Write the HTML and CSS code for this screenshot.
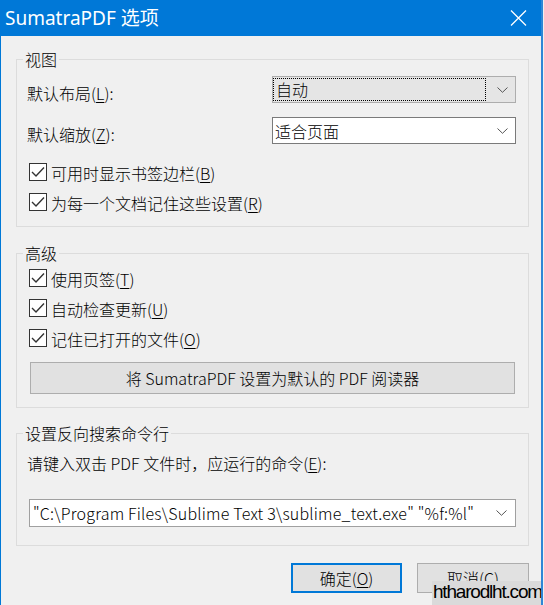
FILE: index.html
```html
<!DOCTYPE html>
<html lang="zh-CN">
<head>
<meta charset="utf-8">
<title>SumatraPDF 选项</title>
<link rel="stylesheet" href="styles.css">
</head>
<body>
<div class="window">
  <div class="titlebar">
    <span class="title">SumatraPDF 选项</span>
    <svg class="close" width="17" height="16" viewBox="0 0 17 16"><path d="M1 0.5 L16 15.5 M16 0.5 L1 15.5" stroke="#fff" stroke-width="1.3" fill="none"/></svg>
  </div>

  <fieldset class="group g1">
    <legend>视图</legend>
    <div class="inner">
      <div class="field">
        <span class="label">默认布局(<u>L</u>):</span>
        <div class="select focused">
          <span class="focus">自动</span>
          <svg class="chev" width="11" height="6" viewBox="0 0 11 6"><path d="M0.5 0.5 L5.5 5.3 L10.5 0.5" stroke="#555" stroke-width="1" fill="none"/></svg>
        </div>
      </div>
      <div class="field">
        <span class="label">默认缩放(<u>Z</u>):</span>
        <div class="select">
          <span class="value">适合页面</span>
          <svg class="chev" width="11" height="6" viewBox="0 0 11 6"><path d="M0.5 0.5 L5.5 5.3 L10.5 0.5" stroke="#555" stroke-width="1" fill="none"/></svg>
        </div>
      </div>
      <div class="checks c1">
        <div class="check"><span class="box"><svg width="16" height="16" viewBox="0 0 16 16"><path d="M2 8 L6 12 L14 3.5" stroke="#333" stroke-width="1.4" fill="none"/></svg></span><span class="ctext">可用时显示书签边栏(<u>B</u>)</span></div>
        <div class="check"><span class="box"><svg width="16" height="16" viewBox="0 0 16 16"><path d="M2 8 L6 12 L14 3.5" stroke="#333" stroke-width="1.4" fill="none"/></svg></span><span class="ctext">为每一个文档记住这些设置(<u>R</u>)</span></div>
      </div>
    </div>
  </fieldset>

  <fieldset class="group g2">
    <legend>高级</legend>
    <div class="inner">
      <div class="check"><span class="box"><svg width="16" height="16" viewBox="0 0 16 16"><path d="M2 8 L6 12 L14 3.5" stroke="#333" stroke-width="1.4" fill="none"/></svg></span><span class="ctext">使用页签(<u>T</u>)</span></div>
      <div class="check"><span class="box"><svg width="16" height="16" viewBox="0 0 16 16"><path d="M2 8 L6 12 L14 3.5" stroke="#333" stroke-width="1.4" fill="none"/></svg></span><span class="ctext">自动检查更新(<u>U</u>)</span></div>
      <div class="check"><span class="box"><svg width="16" height="16" viewBox="0 0 16 16"><path d="M2 8 L6 12 L14 3.5" stroke="#333" stroke-width="1.4" fill="none"/></svg></span><span class="ctext">记住已打开的文件(<u>O</u>)</span></div>
      <button class="wide">将 SumatraPDF 设置为默认的 PDF 阅读器</button>
    </div>
  </fieldset>

  <fieldset class="group g3">
    <legend>设置反向搜索命令行</legend>
    <div class="inner">
      <div class="plain">请键入双击 PDF 文件时，应运行的命令(<u>E</u>):</div>
      <div class="select combo">
        <span class="value">"C:\Program Files\Sublime Text 3\sublime_text.exe" "%f:%l"</span>
        <svg class="chev" width="11" height="6" viewBox="0 0 11 6"><path d="M0.5 0.5 L5.5 5.3 L10.5 0.5" stroke="#555" stroke-width="1" fill="none"/></svg>
      </div>
    </div>
  </fieldset>

  <div class="buttons">
    <button class="btn ok">确定(<u>O</u>)</button>
    <button class="btn cancel">取消(<u>C</u>)</button>
  </div>

  <div class="watermark">htharodlht.com</div>
</div>
</body>
</html>
```

FILE: styles.css
```css
html, body {
  margin: 0;
  padding: 0;
}
body {
  background: #f0f0f0;
  font-family: "Noto Sans CJK SC", "Microsoft YaHei", sans-serif;
  font-size: 16px;
  font-weight: 300;
  color: #000;
}
u {
  text-decoration: underline;
  text-underline-offset: 2px;
}
.window {
  position: relative;
  width: 543px;
  height: 605px;
  box-sizing: border-box;
  border-left: 1px solid #0078d7;
  border-right: 2px solid #2f86d6;
  background: #f0f0f0;
  overflow: hidden;
}
.titlebar {
  height: 36px;
  background: #0078d7;
  color: #fff;
  display: flex;
  align-items: center;
  justify-content: space-between;
  padding: 0 14px 0 4px;
}
.title {
  font-family: "Noto Sans", "Noto Sans CJK SC", sans-serif;
  font-size: 19px;
  font-weight: 400;
  line-height: 36px;
  white-space: nowrap;
}
.close {
  display: block;
}

.group {
  border: 1px solid #dcdcdc;
  margin: 0 12px 0 15px;
  padding: 0;
  min-width: 0;
}
.group legend {
  padding: 0 2px;
  margin-left: 6px;
  font-size: 16px;
  line-height: 20px;
}
.g1 { margin-top: 13px; }
.g2 { margin-top: 16px; }
.g3 { margin-top: 15px; }

.g1 .inner { padding: 7px 12px 9px 10px; }
.g2 .inner { padding: 0 13px 13px 10px; }
.g3 .inner { padding: 10px 12px 18px 10px; }

.field {
  display: flex;
  align-items: center;
  justify-content: space-between;
  height: 27px;
}
.field + .field {
  margin-top: 14px;
}
.label {
  padding-top: 7px;
  line-height: 20px;
  white-space: nowrap;
}
.select {
  width: 244px;
  height: 27px;
  box-sizing: border-box;
  border: 1px solid #7a7a7a;
  background: #fff;
  display: flex;
  align-items: center;
  justify-content: space-between;
  padding: 0 7px 0 2px;
}
.select .value {
  white-space: nowrap;
  line-height: 20px;
}
.select.focused {
  background: #e5e5e5;
  border-color: #adadad;
  padding: 0 7px 0 0;
}
.focus {
  width: 213px;
  height: 23px;
  box-sizing: border-box;
  border: 1px dotted #000;
  line-height: 21px;
  padding-left: 2px;
}
.chev {
  display: block;
  flex: none;
}

.checks.c1 {
  margin-top: 13px;
}
.check {
  display: flex;
  align-items: center;
  height: 30px;
}
.box {
  width: 18px;
  height: 18px;
  box-sizing: border-box;
  border: 1px solid #333;
  background: #fff;
  margin: 0 4px 0 2px;
  display: flex;
  align-items: center;
  justify-content: center;
  flex: none;
}
.box svg {
  display: block;
}
.ctext {
  line-height: 20px;
  padding-top: 2px;
  white-space: nowrap;
}

.wide {
  display: block;
  margin: 9px 0 0 3px;
  width: 485px;
  height: 32px;
  border: 1px solid #adadad;
  background: #e1e1e1;
  font: inherit;
  color: #000;
  padding: 0;
}

.plain {
  line-height: 20px;
  white-space: nowrap;
}
.combo {
  width: 487px;
  height: 28px;
  margin: 26px 0 0 2px;
  border-color: #a0a0a0;
  padding-left: 3px;
  padding-right: 8px;
}
.combo .value {
  letter-spacing: 0.2px;
}

.buttons {
  display: flex;
  justify-content: flex-end;
  gap: 15px;
  margin: 17px 12px 0 0;
}
.btn {
  height: 30px;
  background: #e1e1e1;
  font: inherit;
  color: #000;
  padding: 0;
}
.ok {
  width: 111px;
  border: 2px solid #0078d7;
}
.cancel {
  width: 112px;
  border: 1px solid #adadad;
}

.watermark {
  position: absolute;
  left: 431px;
  top: 581px;
  width: 108px;
  height: 24px;
  background: #dadada;
  font-family: "Liberation Sans", Arial, sans-serif;
  font-size: 19px;
  font-weight: 400;
  letter-spacing: -1.2px;
  line-height: 22px;
  color: #000;
  padding-left: 1px;
  white-space: nowrap;
}
```
